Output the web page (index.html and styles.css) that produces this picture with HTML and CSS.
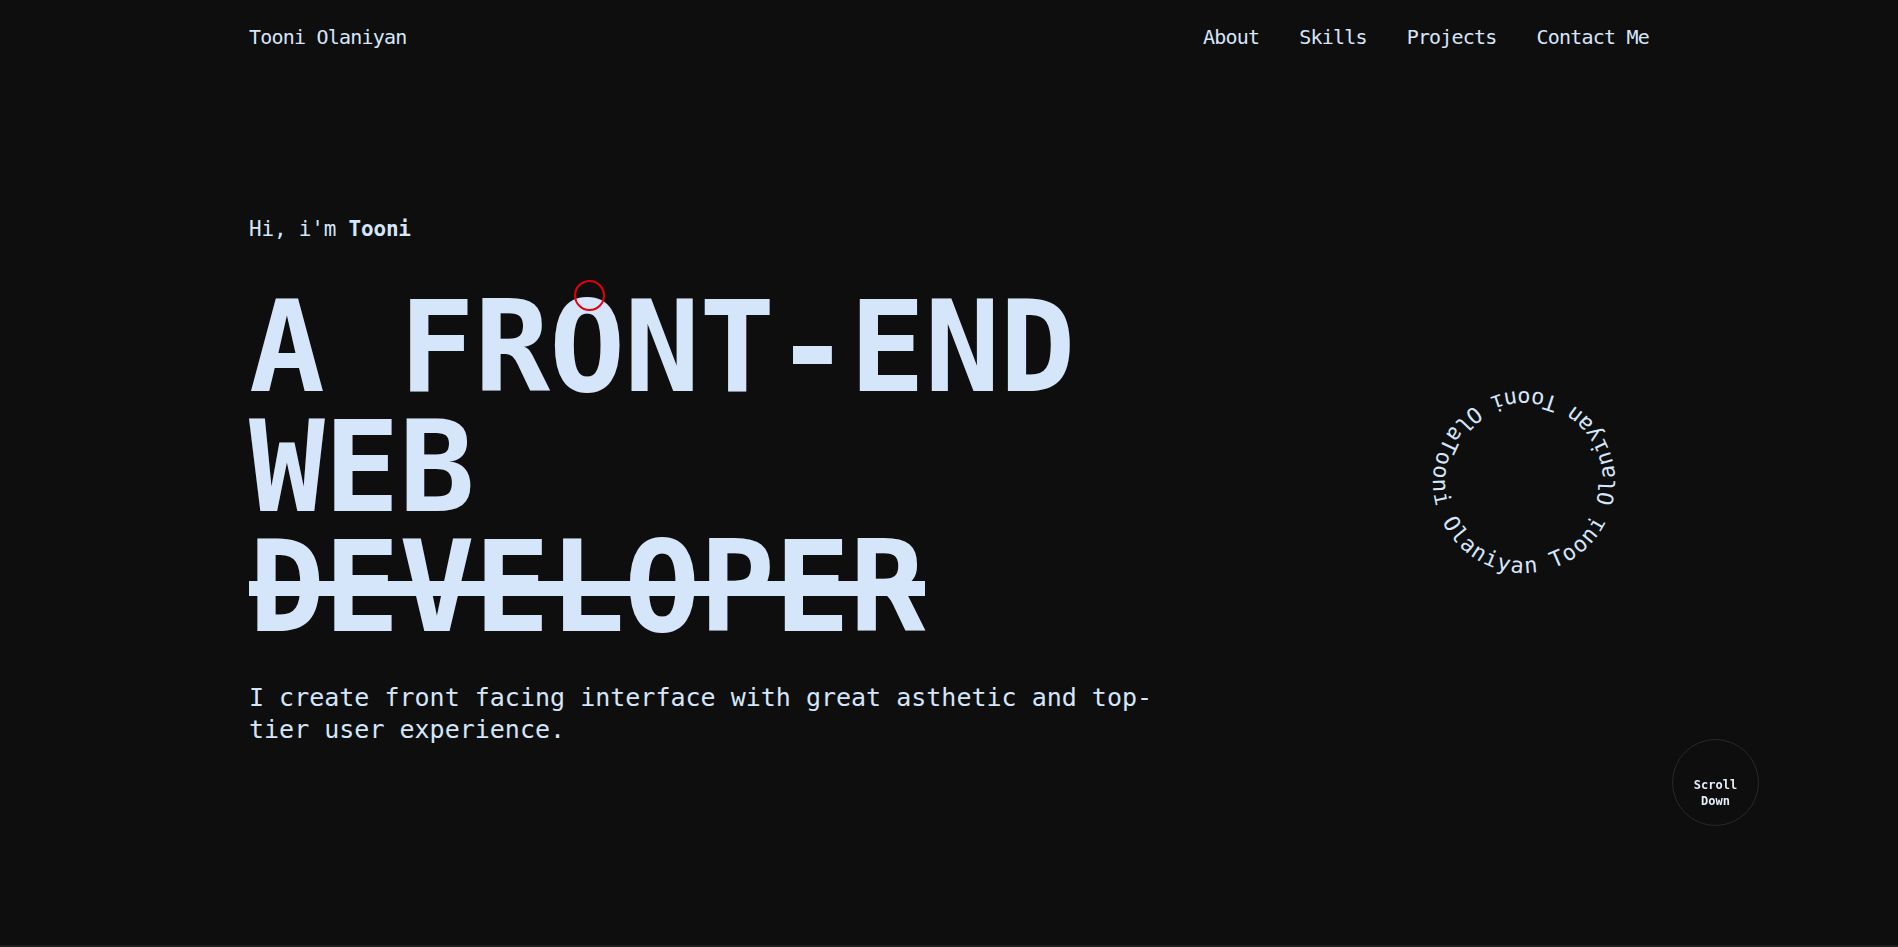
FILE: index.html
```html
<!DOCTYPE html>
<html lang="en">
<head>
<meta charset="utf-8">
<title>Tooni Olaniyan</title>
<link rel="stylesheet" href="styles.css">
</head>
<body>
<header class="site-header">
  <div class="container header-inner">
    <a class="logo" href="#">Tooni Olaniyan</a>
    <nav class="nav">
      <a href="#about">About</a>
      <a href="#skills">Skills</a>
      <a href="#projects">Projects</a>
      <a href="#contact">Contact Me</a>
    </nav>
  </div>
</header>
<main>
  <section class="hero">
    <div class="container hero-inner">
      <div class="hero-text">
        <p class="greeting">Hi, i'm <strong>Tooni</strong></p>
        <h1 class="headline">A FRONT-END WEB <span class="strike">DEVELOPER</span></h1>
        <p class="intro">I create front facing interface with great asthetic and top-tier user experience.</p>
      </div>
      <div class="ring" aria-label="Tooni Olaniyan">
        <span style="--i:0">T</span><span style="--i:1">o</span><span style="--i:2">o</span><span style="--i:3">n</span><span style="--i:4">i</span><span style="--i:5"> </span><span style="--i:6">O</span><span style="--i:7">l</span><span style="--i:8">a</span><span style="--i:9">n</span><span style="--i:10">i</span><span style="--i:11">y</span><span style="--i:12">a</span><span style="--i:13">n</span><span style="--i:14"> </span><span style="--i:15">T</span><span style="--i:16">o</span><span style="--i:17">o</span><span style="--i:18">n</span><span style="--i:19">i</span><span style="--i:20"> </span><span style="--i:21">O</span><span style="--i:22">l</span><span style="--i:23">a</span><span style="--i:24">n</span><span style="--i:25">i</span><span style="--i:26">y</span><span style="--i:27">a</span><span style="--i:28">n</span><span style="--i:29"> </span><span style="--i:30">T</span><span style="--i:31">o</span><span style="--i:32">o</span><span style="--i:33">n</span><span style="--i:34">i</span><span style="--i:35"> </span><span style="--i:36">O</span><span style="--i:37">l</span><span style="--i:38">a</span>
      </div>
    </div>
  </section>
  <section class="next-section"></section>
</main>
<a class="scroll-down" href="#about"><span>Scroll</span><span>Down</span></a>
<div class="cursor"></div>
</body>
</html>
```

FILE: styles.css
```css
* {
  box-sizing: border-box;
}

html, body {
  margin: 0;
  padding: 0;
}

body {
  background: #0e0e0e;
  color: #d6e6fa;
  font-family: "DejaVu Sans Mono", "Liberation Mono", monospace;
}

a {
  color: inherit;
  text-decoration: none;
}

.container {
  width: 1400px;
  margin: 0 auto;
}

/* Header */
.site-header {
  height: 75px;
  padding-top: 26px;
}

.header-inner {
  display: flex;
  justify-content: space-between;
  align-items: center;
  font-size: 20px;
  line-height: 23px;
  letter-spacing: -0.8px;
}

.nav {
  display: flex;
  gap: 40px;
}

/* Hero */
.hero {
  height: 870px;
  padding-top: 142px;
}

.hero-inner {
  display: flex;
  justify-content: space-between;
  align-items: center;
}

.hero-text {
  width: 940px;
}

.greeting {
  margin: 0;
  font-size: 21px;
  line-height: 25px;
  letter-spacing: -0.2px;
}

.greeting strong {
  font-weight: 700;
}

.headline {
  margin: 46px 0 0;
  font-size: 126px;
  line-height: 120px;
  font-weight: 700;
  letter-spacing: -0.8px;
}

.strike {
  position: relative;
}

.strike::after {
  content: "";
  position: absolute;
  left: 0;
  right: 0;
  top: 67px;
  height: 15px;
  background: #d6e6fa;
}

.intro {
  margin: 34px 0 0;
  font-size: 25px;
  line-height: 32px;
}

/* Rotating ring of text */
.ring {
  position: relative;
  width: 200px;
  height: 200px;
  margin-right: 25px;
  font-size: 22px;
}

.ring span {
  position: absolute;
  left: 91px;
  top: 100px;
  width: 18px;
  height: 95px;
  display: flex;
  align-items: flex-end;
  justify-content: center;
  line-height: 1;
  white-space: pre;
  transform-origin: 50% 0;
  transform: rotate(calc((12.5 - var(--i)) * 9.2308deg));
}

.next-section {
  height: 300px;
  background: #1f1f1f;
}

/* Floating scroll button */
.scroll-down {
  position: fixed;
  right: 139px;
  bottom: 121px;
  width: 87px;
  height: 87px;
  border: 1px solid #2a2a2a;
  border-radius: 50%;
  display: flex;
  flex-direction: column;
  align-items: center;
  justify-content: center;
  padding-top: 20px;
  font-size: 12px;
  line-height: 16px;
  font-weight: 700;
  color: #e6eefb;
}

/* Custom cursor ring */
.cursor {
  position: fixed;
  left: 574px;
  top: 280px;
  width: 31px;
  height: 31px;
  border: 2.5px solid #e2000c;
  border-radius: 50%;
  pointer-events: none;
}
```
